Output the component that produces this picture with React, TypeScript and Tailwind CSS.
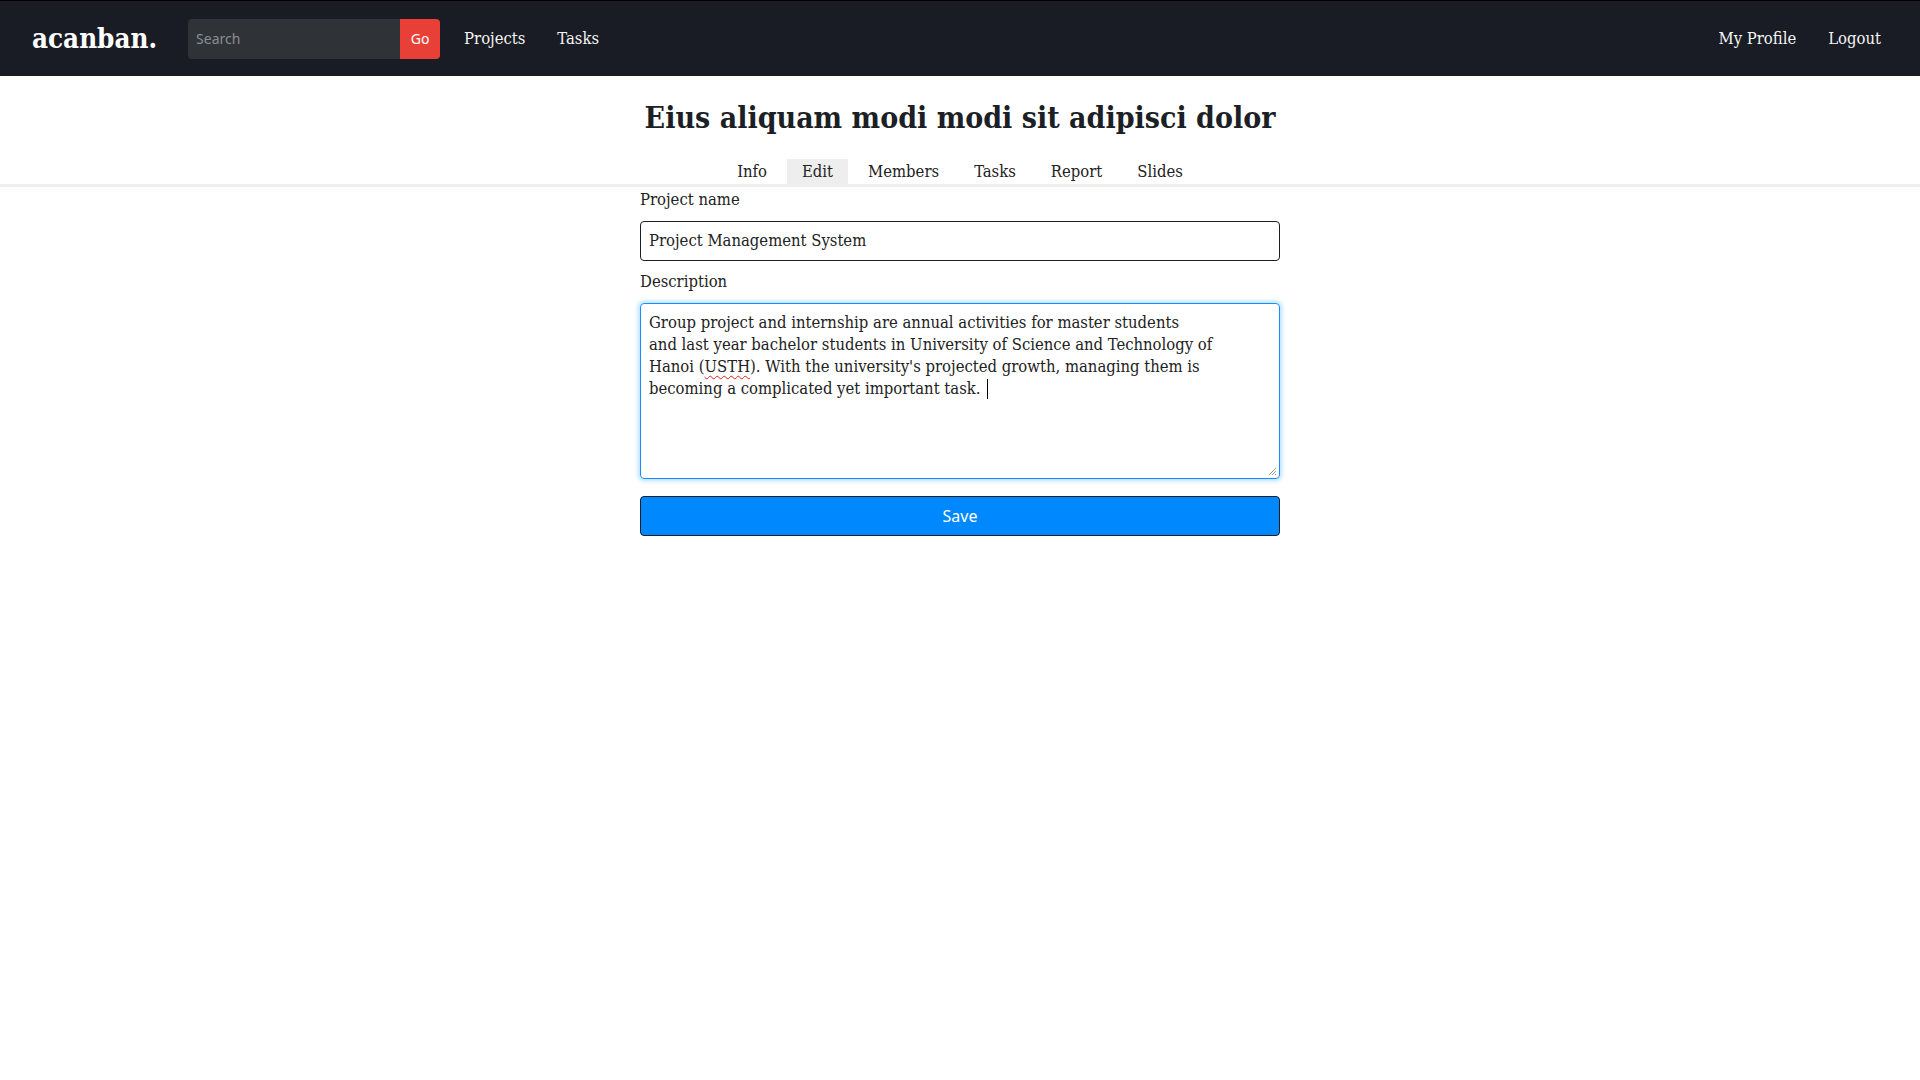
import React from "react";

const slab = "font-['DejaVu_Serif_Condensed','DejaVu_Serif',serif]";

export default function App() {
  const tabs = ["Info", "Edit", "Members", "Tasks", "Report", "Slides"];
  return (
    <div className={`min-h-screen bg-white ${slab} text-[#222]`}>
      <nav className="h-[76px] border-t border-black bg-[#191c24] flex items-center px-[32px]">
        <div className="text-[27.5px] font-bold text-white leading-none">acanban.</div>
        <div className="ml-[31px] flex h-10 rounded-[4px] overflow-hidden">
          <div className="w-[212px] bg-[#2f3337] flex items-center pl-[8px] font-['Noto_Sans',sans-serif] text-[14px] text-[#8a8e92]">
            Search
          </div>
          <div className="w-[40px] bg-[#e84037] flex items-center justify-center font-['Noto_Sans',sans-serif] text-[14px] text-white">
            Go
          </div>
        </div>
        <div className="ml-[24px] pt-[2px] flex gap-[32px] text-[16.5px] text-[#f5f5f5]">
          <span>Projects</span>
          <span>Tasks</span>
        </div>
        <div className="ml-auto mr-[7px] pt-[2px] flex gap-[32px] text-[16.5px] text-[#f5f5f5]">
          <span>My Profile</span>
          <span>Logout</span>
        </div>
      </nav>

      <h1 className="text-center text-[30px] font-bold text-[#1c1f26] pt-[23px] leading-[38px]">
        Eius aliquam modi modi sit adipisci dolor
      </h1>

      <div className="mt-[22px] border-b-[3px] border-[#eeeeee] flex justify-center gap-[5px]">
        {tabs.map((t) => (
          <div
            key={t}
            className={`h-[25px] px-[15px] pt-[2px] flex items-center text-[16.5px] ${t === "Edit" ? "bg-[#eeeeee]" : ""}`}
          >
            {t}
          </div>
        ))}
      </div>

      <div className="w-[640px] mx-auto text-[16.5px]">
        <div className="pt-[2px] leading-[22px]">Project name</div>
        <div className="mt-[10px] h-10 border border-[#1c1f26] rounded-[4px] flex items-center px-[8px]">
          Project Management System
        </div>
        <div className="mt-[10px] leading-[22px]">Description</div>
        <div className="relative mt-[10px] h-[176px] border border-[#1a8cff] rounded-[4px] shadow-[0_0_4px_2px_rgba(90,190,255,0.45)] px-[8px] pt-[8px] leading-[22px] whitespace-pre">
          <div>Group project and internship are annual activities for master students</div>
          <div>and last year bachelor students in University of Science and Technology of</div>
          <div>
            Hanoi (<span className="underline decoration-wavy decoration-[#e02020] decoration-1 underline-offset-[3px]">USTH</span>). With the university's projected growth, managing them is
          </div>
          <div className="flex items-center">
            <span>becoming a complicated yet important task. </span>
            <span className="inline-block w-px h-[20px] bg-black ml-[2px]" />
          </div>
          <svg className="absolute right-[2px] bottom-[2px]" width="10" height="10" viewBox="0 0 10 10">
            <path d="M9 2 L2 9 M9 5 L5 9 M9 8 L8 9" stroke="#999" strokeWidth="1" />
          </svg>
        </div>
        <button className="mt-[17px] w-full h-10 bg-[#0088ff] border border-[#1c1f26] rounded-[4px] text-white font-['Noto_Sans',sans-serif] text-[16px]">
          Save
        </button>
      </div>
    </div>
  );
}
